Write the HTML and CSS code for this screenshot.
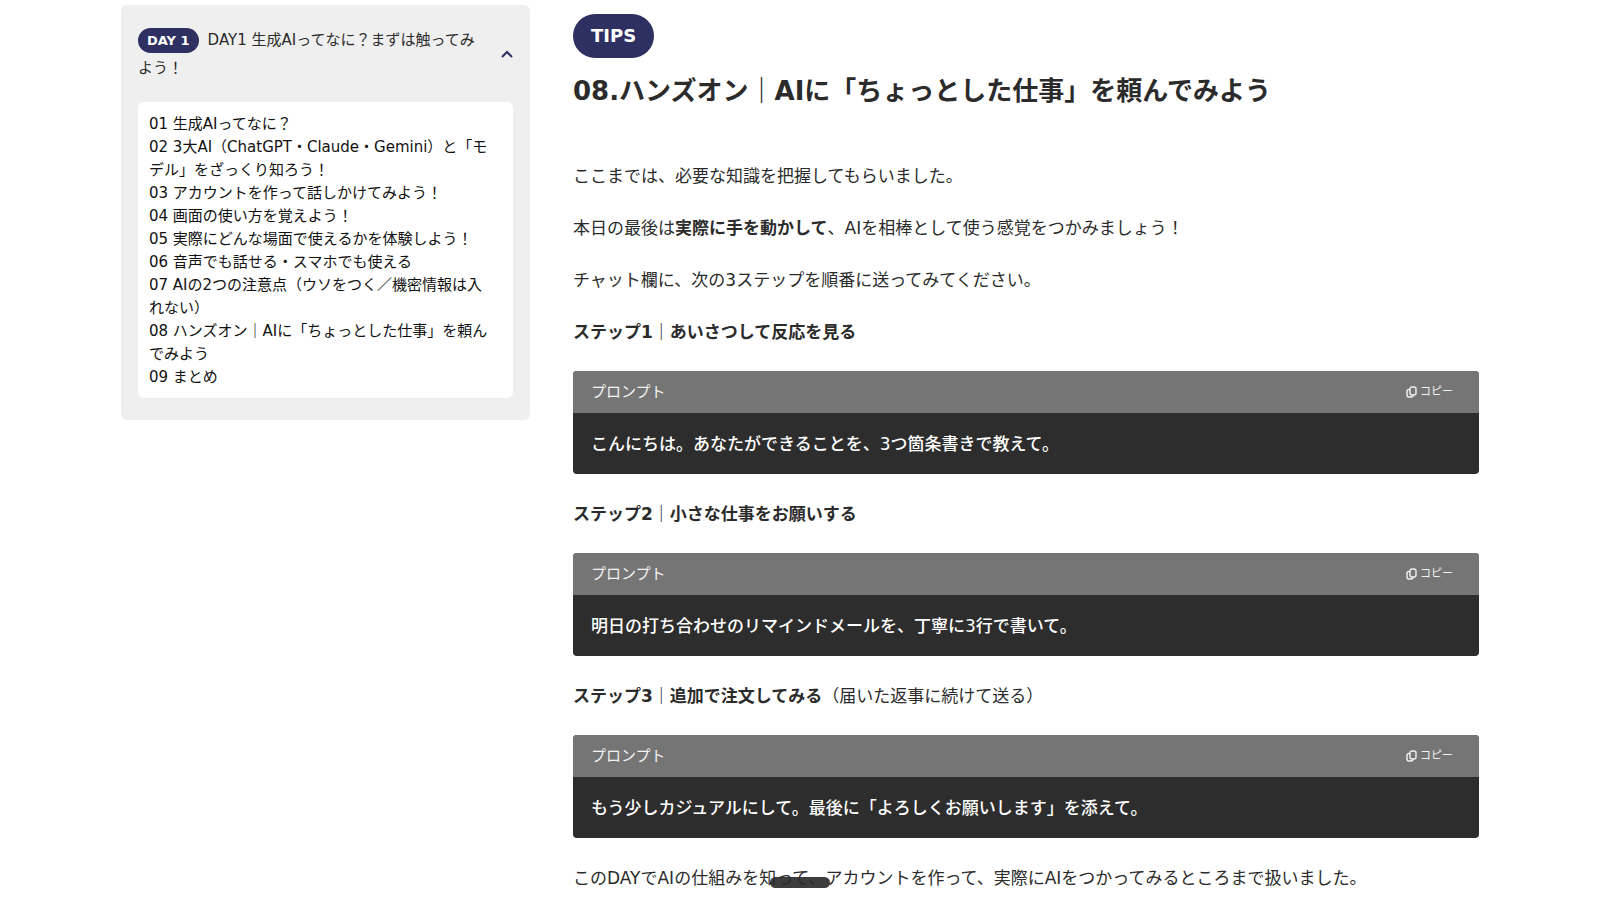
FILE: index.html
```html
<!DOCTYPE html>
<html lang="ja">
<head>
<meta charset="utf-8">
<meta name="viewport" content="width=device-width, initial-scale=1">
<title>08.ハンズオン｜AIに「ちょっとした仕事」を頼んでみよう</title>
<link rel="stylesheet" href="styles.css">
</head>
<body>
<div class="layout">
  <aside class="sidebar">
    <details class="day" open>
      <summary class="day-summary">
        <span class="day-title"><span class="day-badge">DAY 1</span>DAY1 生成AIってなに？まずは触ってみよう！</span>
        <svg class="chevron" viewBox="0 0 12 8" aria-hidden="true"><path d="M1 7l5-5 5 5"/></svg>
      </summary>
      <ul class="lessons">
        <li><a href="#">01 生成AIってなに？</a></li>
        <li><a href="#">02 3大AI（ChatGPT・Claude・Gemini）と「モデル」をざっくり知ろう！</a></li>
        <li><a href="#">03 アカウントを作って話しかけてみよう！</a></li>
        <li><a href="#">04 画面の使い方を覚えよう！</a></li>
        <li><a href="#">05 実際にどんな場面で使えるかを体験しよう！</a></li>
        <li><a href="#">06 音声でも話せる・スマホでも使える</a></li>
        <li><a href="#">07 AIの2つの注意点（ウソをつく／機密情報は入れない）</a></li>
        <li><a href="#">08 ハンズオン｜AIに「ちょっとした仕事」を頼んでみよう</a></li>
        <li><a href="#">09 まとめ</a></li>
      </ul>
    </details>
  </aside>
  <main class="article">
    <span class="tips">TIPS</span>
    <h1 class="title">08.ハンズオン｜AIに「ちょっとした仕事」を頼んでみよう</h1>
    <p>ここまでは、必要な知識を把握してもらいました。</p>
    <p>本日の最後は<strong>実際に手を動かして</strong>、AIを相棒として使う感覚をつかみましょう！</p>
    <p>チャット欄に、次の3ステップを順番に送ってみてください。</p>
    <p><strong>ステップ1｜あいさつして反応を見る</strong></p>
    <div class="prompt">
      <div class="prompt-head">
        <span>プロンプト</span>
        <button class="copy" type="button"><svg class="copy-icon" viewBox="0 0 11 12" aria-hidden="true"><rect x="4" y="1" width="6" height="8" rx="2"/><path d="M4 3.500H3Q1 3.500 1 5.500V9Q1 11 3 11h2Q7 11 7 9"/></svg>コピー</button>
      </div>
      <div class="prompt-body">こんにちは。あなたができることを、3つ箇条書きで教えて。</div>
    </div>
    <p><strong>ステップ2｜小さな仕事をお願いする</strong></p>
    <div class="prompt">
      <div class="prompt-head">
        <span>プロンプト</span>
        <button class="copy" type="button"><svg class="copy-icon" viewBox="0 0 11 12" aria-hidden="true"><rect x="4" y="1" width="6" height="8" rx="2"/><path d="M4 3.500H3Q1 3.500 1 5.500V9Q1 11 3 11h2Q7 11 7 9"/></svg>コピー</button>
      </div>
      <div class="prompt-body">明日の打ち合わせのリマインドメールを、丁寧に3行で書いて。</div>
    </div>
    <p><strong>ステップ3｜追加で注文してみる</strong>（届いた返事に続けて送る）</p>
    <div class="prompt">
      <div class="prompt-head">
        <span>プロンプト</span>
        <button class="copy" type="button"><svg class="copy-icon" viewBox="0 0 11 12" aria-hidden="true"><rect x="4" y="1" width="6" height="8" rx="2"/><path d="M4 3.500H3Q1 3.500 1 5.500V9Q1 11 3 11h2Q7 11 7 9"/></svg>コピー</button>
      </div>
      <div class="prompt-body">もう少しカジュアルにして。最後に「よろしくお願いします」を添えて。</div>
    </div>
    <p>このDAYでAIの仕組みを知って、アカウントを作って、実際にAIをつかってみるところまで扱いました。</p>
  </main>
</div>
<div class="handle" aria-hidden="true"></div>
</body>
</html>
```
FILE: styles.css
```css
* {
  box-sizing: border-box;
}

body {
  margin: 0;
  background: #fff;
  color: #2b2b2b;
  font-family: "DejaVu Sans", "Noto Sans CJK JP", sans-serif;
  font-size: 17px;
  line-height: 28px;
}

.layout {
  display: grid;
  grid-template-columns: 409px minmax(0, 1fr);
  gap: 43px;
  align-items: start;
  max-width: 1358px;
  margin: 0 auto;
}

.sidebar {
  margin-top: 5px;
  padding: 21px 17px 22px;
  border-radius: 6px;
  background: #efefef;
  font-size: 15px;
}

.day-summary {
  display: flex;
  align-items: center;
  justify-content: space-between;
  gap: 16px;
  margin-bottom: 20px;
  line-height: 28px;
  list-style: none;
  cursor: pointer;
}

.day-summary::-webkit-details-marker {
  display: none;
}

.day-title {
  max-width: 348px;
}

.day-badge {
  display: inline-block;
  margin-right: 9px;
  padding: 0 9px;
  border-radius: 13px;
  background: #2d3061;
  color: #fff;
  font-size: 13px;
  font-weight: 700;
  line-height: 25px;
}

.chevron {
  flex: none;
  width: 12px;
  height: 8px;
  fill: none;
  stroke: #2d3061;
  stroke-width: 2;
}

.lessons {
  margin: 0;
  padding: 11px 18px 9px 11px;
  border-radius: 6px;
  background: #fff;
  line-height: 23px;
  list-style: none;
}

.lessons a {
  display: block;
  color: #111;
  text-decoration: none;
}

.article {
  padding-top: 14px;
}

.tips {
  display: block;
  width: fit-content;
  padding: 0 18px;
  border-radius: 22px;
  background: #2d3061;
  color: #fff;
  font-size: 18px;
  font-weight: 700;
  line-height: 44px;
}

.title {
  margin: 13px 0 51px;
  font-size: 26px;
  line-height: 40px;
}

.article p {
  margin: 0 0 24px;
}

.prompt {
  margin: 25px 0 26px;
  border-radius: 4px;
  overflow: hidden;
  background: #2d2d2d;
  color: #fff;
}

.prompt-head {
  display: flex;
  align-items: center;
  justify-content: space-between;
  padding: 7px 26px 7px 18px;
  background: #757575;
  color: #f2f2f2;
  font-size: 15px;
}

.copy {
  display: flex;
  align-items: center;
  gap: 3px;
  padding: 0;
  border: 0;
  background: none;
  color: inherit;
  font-family: inherit;
  font-size: 11px;
  line-height: 16px;
  cursor: pointer;
}

.copy-icon {
  width: 11px;
  height: 12px;
  fill: none;
  stroke: currentColor;
  stroke-width: 1.4;
}

.prompt-body {
  padding: 17px 18px 16px;
  font-weight: 500;
}

.handle {
  position: fixed;
  bottom: 12px;
  left: 50%;
  width: 60px;
  height: 11px;
  margin-left: -30px;
  border-radius: 6px;
  background: rgba(40, 40, 40, 0.9);
}
```
